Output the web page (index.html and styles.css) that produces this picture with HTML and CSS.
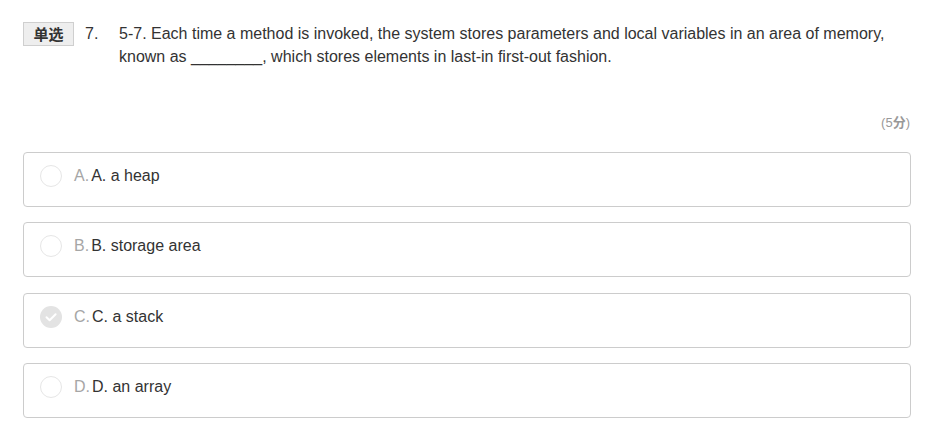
FILE: index.html
```html
<!DOCTYPE html>
<html>
<head>
<meta charset="utf-8">
<link rel="stylesheet" href="styles.css">
</head>
<body>
<div class="question">
  <div class="q-head">
    <span class="q-type">单选</span>
    <span class="q-num">7.</span>
    <div class="q-text">5-7. Each time a method is invoked, the system stores parameters and local variables in an area of memory, known as ________, which stores elements in last-in first-out fashion.</div>
  </div>
  <div class="q-score">(5<b>分</b>)</div>
  <div class="options">
    <div class="option">
      <span class="radio"></span>
      <span class="opt-label">A.</span>
      <span class="opt-text">A. a heap</span>
    </div>
    <div class="option">
      <span class="radio"></span>
      <span class="opt-label">B.</span>
      <span class="opt-text">B. storage area</span>
    </div>
    <div class="option">
      <span class="radio checked">
        <svg width="22" height="22" viewBox="0 0 22 22"><path d="M6.5 11.2 L9.6 14.2 L15.6 8.2" fill="none" stroke="#fff" stroke-width="2" stroke-linecap="round" stroke-linejoin="round"/></svg>
      </span>
      <span class="opt-label">C.</span>
      <span class="opt-text">C. a stack</span>
    </div>
    <div class="option">
      <span class="radio"></span>
      <span class="opt-label">D.</span>
      <span class="opt-text">D. an array</span>
    </div>
  </div>
</div>
</body>
</html>
```

FILE: styles.css
```css
html, body {
  margin: 0;
  padding: 0;
  background: #fff;
}
body {
  font-family: "Liberation Sans", Arial, "Noto Sans CJK SC", sans-serif;
  color: #333;
  font-size: 16px;
}
.question {
  padding: 22px 30px 0 23px;
}
.q-head {
  display: flex;
  align-items: flex-start;
}
.q-type {
  flex: none;
  box-sizing: border-box;
  height: 24px;
  width: 51px;
  line-height: 22px;
  text-align: center;
  background: #eeeeee;
  border: 1px solid #cfcfcf;
  font-weight: bold;
  font-size: 15px;
  color: #333;
  font-family: "Noto Sans CJK SC", sans-serif;
}
.q-num {
  flex: none;
  width: 34px;
  margin-left: 11px;
  line-height: 23px;
}
.q-text {
  flex: 1;
  line-height: 23px;
}
.q-score {
  text-align: right;
  color: #999;
  font-size: 13px;
  margin-top: 45px;
  line-height: 18px;
  padding-right: 1px;
}
.q-score b {
  font-family: "Noto Sans CJK SC", sans-serif;
  font-weight: bold;
}
.options {
  margin-top: 20px;
  display: flex;
  flex-direction: column;
  gap: 15.3px;
}
.option {
  box-sizing: border-box;
  height: 55px;
  border: 1px solid #cccccc;
  border-radius: 4px;
  padding: 12px 16px 19px;
  display: flex;
  align-items: center;
}
.radio {
  flex: none;
  box-sizing: border-box;
  width: 22px;
  height: 22px;
  border-radius: 50%;
  border: 1px solid #e6e6e6;
  margin-right: 12px;
  display: flex;
}
.radio.checked {
  border: none;
  background: #e3e3e3;
}
.opt-label {
  color: #a6a6a6;
  margin-right: 2px;
}
.opt-text {
  color: #333;
}
```
